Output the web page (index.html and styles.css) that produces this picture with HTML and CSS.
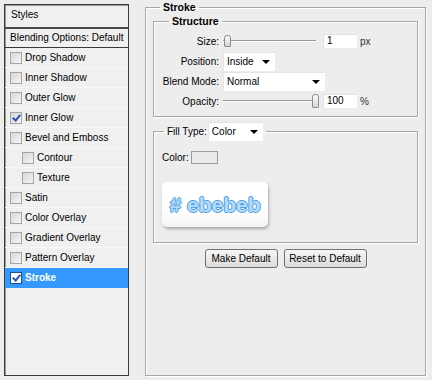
FILE: index.html
```html
<!DOCTYPE html>
<html lang="en">
<head>
  <meta charset="UTF-8" />
  <meta name="viewport" content="width=device-width, initial-scale=1.0" />
  <link rel="stylesheet" href="styles.css">
</head>
<body>
  <div class="dialog">
    <!-- Styles list -->
    <div class="styles-panel">
      <div class="panel-header">Styles</div>
      <div class="panel-blend">Blending Options: Default</div>
      <ul class="effect-list">
        <li class="effect"><span class="check"></span>Drop Shadow</li>
        <li class="effect"><span class="check"></span>Inner Shadow</li>
        <li class="effect"><span class="check"></span>Outer Glow</li>
        <li class="effect"><span class="check checked"></span>Inner Glow</li>
        <li class="effect"><span class="check"></span>Bevel and Emboss</li>
        <li class="effect sub"><span class="check"></span>Contour</li>
        <li class="effect sub"><span class="check"></span>Texture</li>
        <li class="effect"><span class="check"></span>Satin</li>
        <li class="effect"><span class="check"></span>Color Overlay</li>
        <li class="effect"><span class="check"></span>Gradient Overlay</li>
        <li class="effect"><span class="check"></span>Pattern Overlay</li>
        <li class="effect selected"><span class="check checked"></span>Stroke</li>
      </ul>
    </div>

    <!-- Stroke options -->
    <div class="options">
      <fieldset class="group outer">
        <legend>Stroke</legend>

        <fieldset class="group structure">
          <legend>Structure</legend>
          <div class="field-row">
            <span class="field-label">Size:</span>
            <div class="slider"><span class="thumb" style="left: 1px"></span></div>
            <div class="num-input">1</div>
            <span class="unit">px</span>
          </div>
          <div class="field-row">
            <span class="field-label">Position:</span>
            <div class="dropdown small">Inside<span class="arrow"></span></div>
          </div>
          <div class="field-row">
            <span class="field-label">Blend Mode:</span>
            <div class="dropdown wide">Normal<span class="arrow"></span></div>
          </div>
          <div class="field-row">
            <span class="field-label">Opacity:</span>
            <div class="slider"><span class="thumb tall" style="left: 89px"></span></div>
            <div class="num-input">100</div>
            <span class="unit">%</span>
          </div>
        </fieldset>

        <fieldset class="group fill">
          <legend class="fill-legend">Fill Type:<div class="dropdown fill-type">Color<span class="arrow"></span></div></legend>
          <div class="color-row">
            <span>Color:</span>
            <span class="swatch"></span>
          </div>
          <div class="preview">
            <span class="preview-text"># ebebeb</span>
          </div>
        </fieldset>

        <div class="buttons">
          <button class="btn make">Make Default</button>
          <button class="btn reset">Reset to Default</button>
        </div>
      </fieldset>
    </div>
  </div>
</body>
</html>
```

FILE: styles.css
```css
body {
  margin: 0;
  background-color: #ededed;
  font-family: 'Liberation Sans', Arial, sans-serif;
  font-size: 10px;
  color: #000;
}

.dialog {
  display: flex;
  gap: 16px;
  padding: 4px 6px 4px 4px;
  height: 380px;
  box-sizing: border-box;
}

/* left list */

.styles-panel {
  width: 125px;
  height: 372px;
  box-sizing: border-box;
  border: 1px solid #3a3a3a;
  box-shadow: inset 1px 1px #9a9a9a;
  background-color: #f0f0f0;
}

.panel-header {
  height: 22px;
  line-height: 20px;
  padding-left: 6px;
  border-bottom: 2px solid #4a4a4a;
}

.panel-blend {
  height: 18px;
  line-height: 18px;
  padding-left: 5px;
  border-bottom: 1px solid #3a3a3a;
}

.effect-list {
  list-style: none;
  margin: 0;
  padding: 0;
}

.effect {
  display: flex;
  align-items: center;
  gap: 3px;
  height: 19px;
  padding-left: 5px;
  border-bottom: 1px solid #f8f8f8;
}

.effect.sub {
  padding-left: 17px;
}

.effect.selected {
  background-color: #3399ff;
  color: #fff;
  font-weight: bold;
  border-bottom-color: #3399ff;
}

.check {
  width: 10px;
  height: 10px;
  border: 1px solid #a5a5a5;
  background: linear-gradient(135deg, #d6d6d6, #f6f6f6);
  position: relative;
}

.check.checked::after {
  content: "";
  position: absolute;
  left: 3px;
  top: 0px;
  width: 3px;
  height: 6px;
  border: solid #2a4fb8;
  border-width: 0 2px 2px 0;
  transform: rotate(40deg);
}

.selected .check {
  background: #fff;
  border-color: #1c4f9a;
}

/* right options */

.options {
  flex: 1;
  margin-top: -3px;
}

.group {
  margin: 0;
  min-width: 0;
  box-sizing: border-box;
  border: 1px solid #a6a6a6;
  box-shadow: inset 1px 1px #fff, 1px 1px #fff;
}

.group legend {
  padding: 0 3px;
  margin-left: 7px;
  line-height: 13px;
  font-weight: bold;
  font-size: 10.5px;
}

.outer {
  height: 375px;
  padding: 1px 7px 7px 7px;
}

.structure {
  padding: 3px 8px 5px 8px;
}

.field-row {
  display: flex;
  align-items: center;
  height: 20px;
}

.field-label {
  width: 57px;
  text-align: right;
  margin-right: 4px;
}

.slider {
  position: relative;
  width: 96px;
  height: 12px;
  margin-right: 4px;
}

.slider::before {
  content: "";
  position: absolute;
  left: 0;
  right: 3px;
  top: 5px;
  border-top: 1px solid #9a9a9a;
  border-bottom: 1px solid #fff;
}

.thumb {
  position: absolute;
  top: 0;
  width: 5px;
  height: 10px;
  border: 1px solid #8c8c8c;
  border-radius: 3px 3px 1px 1px;
  background: linear-gradient(#fdfdfd, #d4d4d4);
}

.thumb.tall {
  top: -1px;
  height: 12px;
}

.num-input {
  width: 30px;
  height: 14px;
  line-height: 14px;
  padding-left: 4px;
  background-color: #fff;
  box-shadow: inset 1px 1px #e2e2e2;
}

.unit {
  margin-left: 3px;
  color: #333;
}

.dropdown {
  position: relative;
  height: 19px;
  line-height: 19px;
  padding-left: 4px;
  box-sizing: border-box;
  background-color: #fff;
  box-shadow: inset 1px 1px #e4e4e4;
  font-weight: normal;
  font-size: 10px;
}

.dropdown.small {
  width: 52px;
}

.dropdown.wide {
  width: 102px;
}

.dropdown.fill-type {
  width: 55px;
}

.arrow {
  position: absolute;
  right: 5px;
  top: 8px;
  border-left: 4px solid transparent;
  border-right: 4px solid transparent;
  border-top: 4px solid #000;
}

.fill {
  margin-top: 5px;
  padding: 9px 8px 15px 8px;
}

.group .fill-legend {
  display: flex;
  align-items: center;
  gap: 1px;
  margin-left: 2px;
  line-height: 19px;
  font-weight: normal;
  font-size: 10px;
}

.color-row {
  display: flex;
  align-items: center;
  gap: 2px;
  height: 14px;
}

.swatch {
  width: 25px;
  height: 11px;
  background-color: #ebebeb;
  border: 1px solid #9d9d9d;
}

.preview {
  margin-top: 18px;
  width: 106px;
  height: 45px;
  display: flex;
  align-items: center;
  justify-content: center;
  background: linear-gradient(#ffffff 60%, #f4f4f4);
  border-radius: 5px;
  box-shadow: 1px 2px 3px #a8a8a8;
}

.preview-text {
  font-family: 'Liberation Sans', Arial, sans-serif;
  font-size: 21px;
  font-weight: bold;
  color: #b4dbf9;
  text-shadow: 1px 0 #4f9fe3, -1px 0 #4f9fe3, 0 1px #4f9fe3, 0 -1px #4f9fe3;
}

.buttons {
  display: flex;
  justify-content: center;
  gap: 6px;
  margin-top: 6px;
}

.btn {
  height: 19px;
  padding: 0;
  font-family: 'Liberation Sans', Arial, sans-serif;
  font-size: 10px;
  color: #000;
  border: 1px solid #707070;
  border-radius: 3px;
  background: linear-gradient(#f6f6f6, #dcdcdc);
}

.btn.make {
  width: 73px;
}

.btn.reset {
  width: 83px;
}
```
